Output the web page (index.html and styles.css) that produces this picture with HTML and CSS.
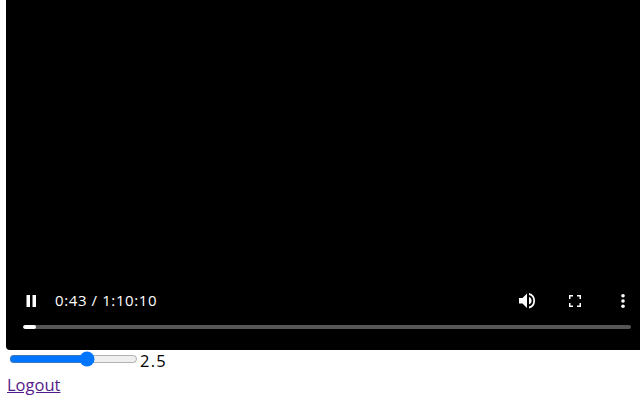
FILE: index.html
```html
<!DOCTYPE html>
<html lang="en">
<head>
<meta charset="utf-8">
<title>Player</title>
<link rel="stylesheet" href="styles.css">
</head>
<body>
<div class="video">
  <div class="controls">
    <div class="buttons">
      <svg class="icon pause" viewBox="0 0 24 24"><path d="M7.500 8h3.500v12H7.500zM13.500 8H17v12h-3.500z"/></svg>
      <span class="time">0:43 / 1:10:10</span>
      <span class="spacer"></span>
      <svg class="icon volume" viewBox="0 0 24 24"><path d="M4 11v5.500h3.500l4.500 4.500V6.500L7.500 11H4z"/><path d="M14 9.800v7.800a4.200 4.200 0 0 0 0-7.800z"/><path d="M14 6v2a6 6 0 0 1 0 11.500v2a8 8 0 0 0 0-15.500z"/></svg>
      <svg class="icon full" viewBox="0 0 24 24"><path d="M6 12V8h4v1.500H7.500V12zM14 8h4v4h-1.500V9.500H14zM6 16h1.500v2.500H10V20H6zM16.500 16H18v4h-4v-1.500h2.500z"/></svg>
      <svg class="icon more" viewBox="0 0 24 24"><circle cx="12" cy="8.700" r="1.800"/><circle cx="12" cy="14" r="1.800"/><circle cx="12" cy="19.300" r="1.800"/></svg>
    </div>
    <div class="timeline"><div class="played" style="width:2.100%"></div></div>
  </div>
</div>
<div class="speed">
  <input type="range" min="0" max="4" step="0.01" value="2.47"><span>2.5</span>
</div>
<p class="logout"><a href="#">Logout</a></p>
</body>
</html>
```

FILE: styles.css
```css
html, body {
  margin: 0;
  overflow: hidden;
}
body {
  padding-left: 7px;
  height: 400px;
  box-sizing: border-box;
  font-family: "Open Sans", "Noto Sans", sans-serif;
  font-size: 16.500px;
  color: #000;
  background: #fff;
}
.video {
  margin-left: -1px;
  height: 350px;
  background: #000;
  border-radius: 0 0 0 4px;
  display: flex;
  flex-direction: column;
  justify-content: flex-end;
}
.controls {
  padding: 0 9px 21px 17px;
}
.buttons {
  display: flex;
  align-items: center;
  height: 24px;
  margin-bottom: 14px;
  color: #fff;
}
.icon {
  width: 24px;
  height: 24px;
  fill: #fff;
  flex: none;
}
.pause { margin-left: -4px; }
.time {
  margin-left: 12px;
  padding-top: 2px;
  font-size: 15px;
  letter-spacing: 0.6px;
}
.spacer { flex: 1; }
.volume { margin-right: 24px; }
.full { margin-right: 24px; }
.more { margin-right: -4px; }
.timeline {
  height: 4px;
  border-radius: 2px;
  background: #565656;
  overflow: hidden;
}
.played {
  height: 4px;
  background: #fff;
  border-radius: 2px;
}
.speed {
  display: flex;
  align-items: flex-start;
  height: 20px;
}
.speed input {
  margin: 1px 2px 0;
  width: 129px;
}
.speed span {
  line-height: 22px;
  letter-spacing: 1.200px;
}
.logout {
  margin: 3px 0 0;
  line-height: 24px;
}
.logout a { color: #551a8b; }
```
